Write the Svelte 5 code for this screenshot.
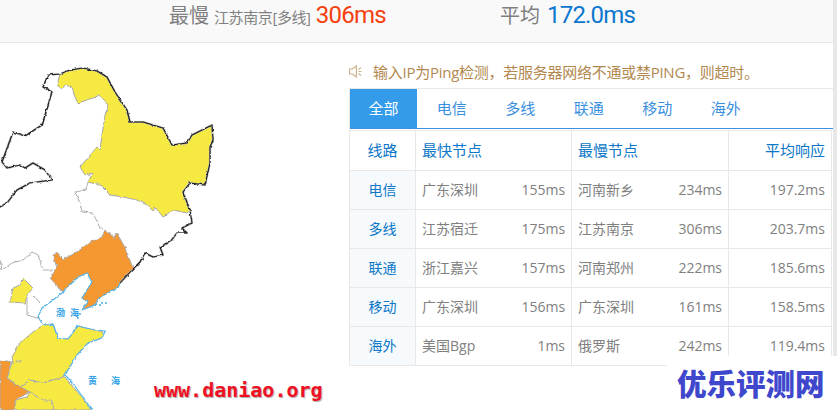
<script lang="ts">
	const tabs = ['全部', '电信', '多线', '联通', '移动', '海外'];

	const rows = [
		{ line: '电信', fast: '广东深圳', fastMs: '155ms', slow: '河南新乡', slowMs: '234ms', avg: '197.2ms' },
		{ line: '多线', fast: '江苏宿迁', fastMs: '175ms', slow: '江苏南京', slowMs: '306ms', avg: '203.7ms' },
		{ line: '联通', fast: '浙江嘉兴', fastMs: '157ms', slow: '河南郑州', slowMs: '222ms', avg: '185.6ms' },
		{ line: '移动', fast: '广东深圳', fastMs: '156ms', slow: '广东深圳', slowMs: '161ms', avg: '158.5ms' },
		{ line: '海外', fast: '美国Bgp', fastMs: '1ms', slow: '俄罗斯', slowMs: '242ms', avg: '119.4ms' }
	];

	const coast =
		'M60 74L48 75 43 87 52 92 42 125 25 136 13 132 2 162 7 168 20 165 25 168 33 163 45 170 52 180 30 183 17 190 7 203 0 207M60 74L70 70 83 68 97 71 107 77 115 92 127 110 130 122 143 122 163 128 172 145 187 143 192 135 212 125 213 140 210 147 210 163 205 185 190 183 183 192 190 210 192 223 182 228 187 233 177 233 170 242 160 247 163 255 153 257 145 253 140 262 132 270 120 283';

	// small islands off the Liaodong peninsula
	const islands = [
		[100, 305],
		[102, 303],
		[106, 303],
		[78, 318],
		[80, 314],
		[77, 326]
	];
</script>

<div class="page">
	<div class="rail"></div>

	<header class="summary">
		<span class="summary__item">
			<span class="summary__label">最慢</span>
			<span class="summary__place">江苏南京[多线]</span>
			<span class="summary__slow">306ms</span>
		</span>
		<span class="summary__item">
			<span class="summary__label">平均</span>
			<span class="summary__avg">172.0ms</span>
		</span>
	</header>

	<main class="content">
		<svg class="map" viewBox="0 43 349 367" width="349" height="367" aria-label="map">
			<defs>
				<filter id="rough" filterUnits="userSpaceOnUse" x="-5" y="40" width="240" height="375">
					<feTurbulence type="fractalNoise" baseFrequency="0.22" numOctaves="2" seed="4" />
					<feDisplacementMap in="SourceGraphic" scale="3" xChannelSelector="R" yChannelSelector="G" />
					<feGaussianBlur stdDeviation="0.35" />
				</filter>
			</defs>

			<g filter="url(#rough)">
				<!-- provinces -->
				<path class="yellow" d="M60 74L70 70 83 68 97 71 107 77 115 92 127 110 130 122 143 122 163 128 172 145 187 143 192 135 212 125 213 140 210 147 210 163 205 185 190 183 183 192 190 210 187 213 173 210 163 217 155 207 153 211 147 205 137 200 123 197 110 195 100 185 88 182 93 173 85 175 80 167 97 147 100 150 102 135 105 115 108 105 100 95 93 98 78 103 75 97 72 87 65 85 62 89 57 85Z" />
				<path class="orange" d="M105 230L115 238 117 233 125 248 133 268 120 283 118 288 100 297 95 305 82 310 88 302 82 298 92 282 87 273 78 277 63 292 50 278 57 268 53 255 58 253 63 260 80 250 90 242 102 237Z" />
				<path class="yellow" d="M23 278L33 288 27 295 25 303 10 302 13 288 20 285Z" />
				<path class="yellow" d="M43 325L53 324 58 338 68 339 78 326 90 329 103 332 102 338 88 343 77 355 65 375 63 377 43 383 30 380 20 387 7 378 13 363 12 357 20 343 33 332Z" />
				<path class="yellow" d="M65 377L90 407 92 410 15 410 15 400 27 397 30 392 20 387 30 380 43 383 63 377Z" />
				<path class="orange" d="M0 360L12 362 7 378 20 387 30 392 15 400 15 410 0 410Z" />

				<!-- borders -->
				<path class="inland" d="M88 182L86 190 75 192 80 203 82 212 93 213 100 228 105 230M0 260L2 270 12 263 23 260 32 252 38 255 43 270 53 270M63 292L57 297 42 308M33 295L40 303M27 297L27 315 37 318 40 317M30 392L43 400 52 400 54 410M13 363L22 360" />
				<path class="coast-halo" d={coast} />
				<path class="coast" d={coast} />
				<path class="sea" d="M120 283L118 288 100 297 95 305 82 310 88 302 82 298 92 282 87 273 78 277 63 292 57 297 42 308 38 317 43 325 53 324 58 338 68 339 78 326 90 329 105 331 102 338 88 343 77 355 65 375 72 382 90 407 92 410" />
			</g>

			<g class="sea-marks">
				{#each islands as [x, y]}
					<circle cx={x} cy={y} r="0.9" />
				{/each}
				<text x="56" y="316">渤</text>
				<text x="70" y="316">海</text>
				<text x="88" y="384">黄</text>
				<text x="111" y="384">海</text>
			</g>
		</svg>

		<section class="panel">
			<p class="notice">
				<svg class="notice__icon" viewBox="0 0 13 13" width="13" height="13" aria-hidden="true">
					<path d="M.6 4h2.600L7.400 1v11L3.200 9H.6z" />
					<path d="M9.500 6.500h3M9.500 4.500L12 2.500M9.500 8.500L12 10.500" />
				</svg>
				输入IP为Ping检测，若服务器网络不通或禁PING，则超时。
			</p>

			<div class="box">
				<ul class="tabs">
					{#each tabs as tab, i}
						<li class="tab" class:tab--active={i === 0}>{tab}</li>
					{/each}
				</ul>

				<table class="speed">
					<colgroup>
						<col style="width: 66px" />
						<col style="width: 100px" />
						<col style="width: 56px" />
						<col style="width: 100px" />
						<col style="width: 57px" />
						<col />
					</colgroup>
					<thead>
						<tr>
							<th class="center">线路</th>
							<th colspan="2">最快节点</th>
							<th colspan="2">最慢节点</th>
							<th class="right">平均响应</th>
						</tr>
					</thead>
					<tbody>
						{#each rows as row}
							<tr>
								<th class="center line">{row.line}</th>
								<td class="name">{row.fast}</td>
								<td class="ms">{row.fastMs}</td>
								<td class="name">{row.slow}</td>
								<td class="ms">{row.slowMs}</td>
								<td class="right">{row.avg}</td>
							</tr>
						{/each}
					</tbody>
				</table>
			</div>
		</section>
	</main>

	<span class="stamp">www.daniao.org</span>
	<div class="brand">优乐评测网</div>
</div>

<style>
	:global(body) {
		background: #fff;
	}

	.page {
		position: relative;
		width: 837px;
		height: 410px;
		overflow: hidden;
		box-sizing: border-box;
		padding-right: 4px;
		background: #fff;
		font-family: 'Open Sans', 'Noto Sans CJK SC', sans-serif;
		color: #808080;
	}

	.rail {
		position: absolute;
		top: 0;
		right: 0;
		bottom: 0;
		width: 4px;
		background: #e8e8e8;
	}

	.summary {
		display: flex;
		gap: 114px;
		align-items: baseline;
		box-sizing: border-box;
		height: 43px;
		padding: 0 0 0 169px;
		background: #f9f9f9;
		border-bottom: 1px solid #e8e8e8;
		line-height: 30px;
	}

	.summary__item {
		display: flex;
		align-items: baseline;
		gap: 5px;
	}

	.summary__label {
		font-size: 20px;
		color: #7f7f7f;
	}

	.summary__place {
		font-size: 15px;
		letter-spacing: -0.4px;
		color: #808080;
	}

	.summary__slow,
	.summary__avg {
		font-family: Roboto, sans-serif;
		font-size: 24px;
		color: #f6400f;
		letter-spacing: -0.7px;
	}

	.summary__avg {
		color: #0b77d0;
		margin-left: 2px;
		letter-spacing: -0.8px;
	}

	.content {
		display: flex;
	}

	.map {
		flex: none;
		display: block;
	}

	.yellow,
	.orange {
		stroke: #a9a9a9;
		stroke-width: 1;
		stroke-linejoin: round;
	}

	.yellow {
		fill: #f6ea42;
	}

	.orange {
		fill: #f69833;
	}

	.inland,
	.coast,
	.coast-halo,
	.sea {
		fill: none;
		stroke-linejoin: round;
	}

	.inland {
		stroke: #b0b0b0;
		stroke-width: 1;
	}

	.coast-halo {
		stroke: #b5b5b5;
		stroke-width: 2.2;
	}

	.coast {
		stroke: #1a1a1a;
		stroke-width: 1.1;
	}

	.sea {
		stroke: #58b6ea;
		stroke-width: 1.2;
	}

	.sea-marks {
		fill: #35a4e6;
		font-size: 9px;
		font-weight: 700;
	}

	.panel {
		flex: none;
		width: 484px;
	}

	.notice {
		display: flex;
		align-items: center;
		box-sizing: border-box;
		height: 45px;
		margin: 0;
		padding-top: 12px;
		gap: 11px;
		font-size: 15px;
		line-height: 20px;
		letter-spacing: -0.26px;
		color: #b2884f;
		white-space: nowrap;
	}

	.notice__icon {
		flex: none;
		fill: none;
		stroke: #cdb38c;
		stroke-width: 1.2;
	}

	.box {
		border-top: 1px solid #e8e8e8;
		border-left: 1px solid #e8e8e8;
	}

	.tabs {
		display: flex;
		margin: 0 0 1px;
		padding: 0;
		list-style: none;
		height: 39px;
		border-bottom: 1px solid #3d91dc;
	}

	.tab {
		flex: none;
		width: 68.5px;
		text-align: center;
		font-size: 15px;
		line-height: 39px;
		color: #3a8fdf;
	}

	.tab--active {
		width: 67px;
		margin-right: 0.5px;
		background: #349bea;
		color: #fff;
	}

	.speed {
		width: 483px;
		table-layout: fixed;
		border-collapse: collapse;
		margin-left: -1px;
		font-size: 14px;
	}

	.speed th,
	.speed td {
		height: 39px;
		padding: 0 6px 2px;
		border: 1px solid #e8e8e8;
		font-weight: 400;
		text-align: left;
		white-space: nowrap;
		box-sizing: border-box;
	}

	.speed thead th {
		color: #0b77c8;
		font-size: 15px;
		height: 40px;
	}

	.speed .center {
		text-align: center;
	}

	.speed .right {
		text-align: right;
	}

	.speed .line {
		background: #f7fafd;
		color: #0b77c8;
	}

	.speed .name {
		border-right: 0;
	}

	.speed .ms {
		border-left: 0;
		text-align: right;
	}

	.stamp {
		position: absolute;
		left: 154px;
		top: 378px;
		font: 700 20px/24px 'DejaVu Sans Mono', monospace;
		color: #f01024;
		text-shadow: 1px 1px 1px #aaa;
		white-space: nowrap;
	}

	.brand {
		position: absolute;
		left: 667px;
		top: 356px;
		width: 170px;
		height: 54px;
		box-sizing: border-box;
		padding-left: 10px;
		background: #fff;
		font: 900 29.5px/52px 'Noto Sans CJK SC', sans-serif;
		color: #3f48cc;
		white-space: nowrap;
	}
</style>
